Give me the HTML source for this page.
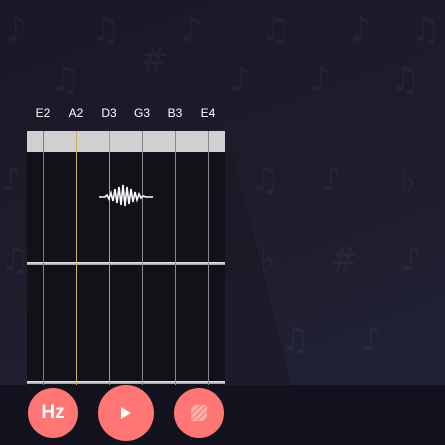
<!DOCTYPE html>
<html><head><style>
body{margin:0;width:445px;height:445px;overflow:hidden;background:linear-gradient(160deg,#181826 0%,#1d1d2c 50%,#24243a 100%);font-family:"Liberation Sans",sans-serif;position:relative}
.lbl{position:absolute;top:106px;color:#fff;font-size:12px;width:30px;text-align:center}
.shadow{position:absolute;left:0;top:0;width:445px;height:445px}
.notes{position:absolute;left:0;top:0;width:445px;height:445px;color:#fff;opacity:0.035;font-family:"DejaVu Sans",sans-serif;font-size:34px}
.notes span{position:absolute}
.fb{position:absolute;left:27px;top:131px;width:198px;height:254px;background:#111118}
.nut{position:absolute;left:0;top:0;width:198px;height:21px;background:#d0d0d0}
.str{position:absolute;top:0;height:254px;width:1px}
.fret{position:absolute;left:0;width:198px;height:3px;background:linear-gradient(#eee,#999)}
.bar{position:absolute;left:0;top:385px;width:445px;height:60px;background:#13131f}
.btn{position:absolute;border-radius:50%;background:#ff7675;color:#fff;display:flex;align-items:center;justify-content:center}
</style></head><body>
<div class="notes">
<span style="left:5px;top:10px">♪</span><span style="left:90px;top:10px">♫</span><span style="left:180px;top:10px">♪</span><span style="left:260px;top:10px">♫</span><span style="left:350px;top:10px">♪</span><span style="left:410px;top:10px">♫</span>
<span style="left:50px;top:60px">♫</span><span style="left:140px;top:40px">#</span><span style="left:230px;top:60px">♪</span><span style="left:310px;top:60px">♪</span><span style="left:390px;top:60px">♫</span>
<span style="left:250px;top:160px">♫</span><span style="left:320px;top:160px">♪</span><span style="left:400px;top:160px">♭</span>
<span style="left:260px;top:240px">♭</span><span style="left:330px;top:240px">#</span><span style="left:400px;top:240px">♪</span>
<span style="left:280px;top:320px">♫</span><span style="left:360px;top:320px">♪</span>
<span style="left:0px;top:160px">♪</span><span style="left:0px;top:240px">♫</span>
</div>
<svg class="shadow"><polygon points="225,150 232,150 292,385 225,385" fill="#1a1a27" opacity="0.7"/></svg>
<div class="lbl" style="left:28px">E2</div>
<div class="lbl" style="left:61px">A2</div>
<div class="lbl" style="left:94px">D3</div>
<div class="lbl" style="left:127px">G3</div>
<div class="lbl" style="left:160px">B3</div>
<div class="lbl" style="left:193px">E4</div>
<div class="fb">
<div class="nut"></div>
<div class="fret" style="top:131px"></div>
<div class="fret" style="top:250px"></div>
<div class="str" style="left:16px;background:#8a7e5a"></div>
<div class="str" style="left:49px;background:#c9b060"></div>
<div class="str" style="left:82px;background:#a89e80"></div>
<div class="str" style="left:115px;background:#888"></div>
<div class="str" style="left:148px;background:#888"></div>
<div class="str" style="left:181px;background:#888"></div>
<svg style="position:absolute;left:72px;top:50px" width="56" height="30" viewBox="0 0 56 30"><path d="M0 16 L6 16 L8 14 L10 18 L12 12 L14 20 L16 8 L18 22 L20 6 L22 24 L24 4 L26 25 L28 6 L30 23 L32 8 L34 21 L36 11 L38 19 L40 13 L42 17 L44 15 L47 16 L54 16" stroke="#fff" stroke-width="1.6" fill="none"/></svg>
</div>
<div class="bar"></div>
<div class="btn" style="left:28px;top:388px;width:50px;height:50px;font-weight:bold;font-size:19px">Hz</div>
<div class="btn" style="left:98px;top:385px;width:56px;height:56px"><svg width="14" height="14" viewBox="0 0 14 14"><path d="M2 1 L12 7 L2 13Z" fill="#fff"/></svg></div>
<div class="btn" style="left:174px;top:388px;width:50px;height:50px"><svg width="16" height="16" viewBox="0 0 16 16"><path d="M4 0H16V12L12 16H0V4Z" fill="#ffb0ae"/><path d="M0 10L10 0M0 16L16 0M6 16L16 6" stroke="#ff7675" stroke-width="1.2"/></svg></div>
</body></html>
